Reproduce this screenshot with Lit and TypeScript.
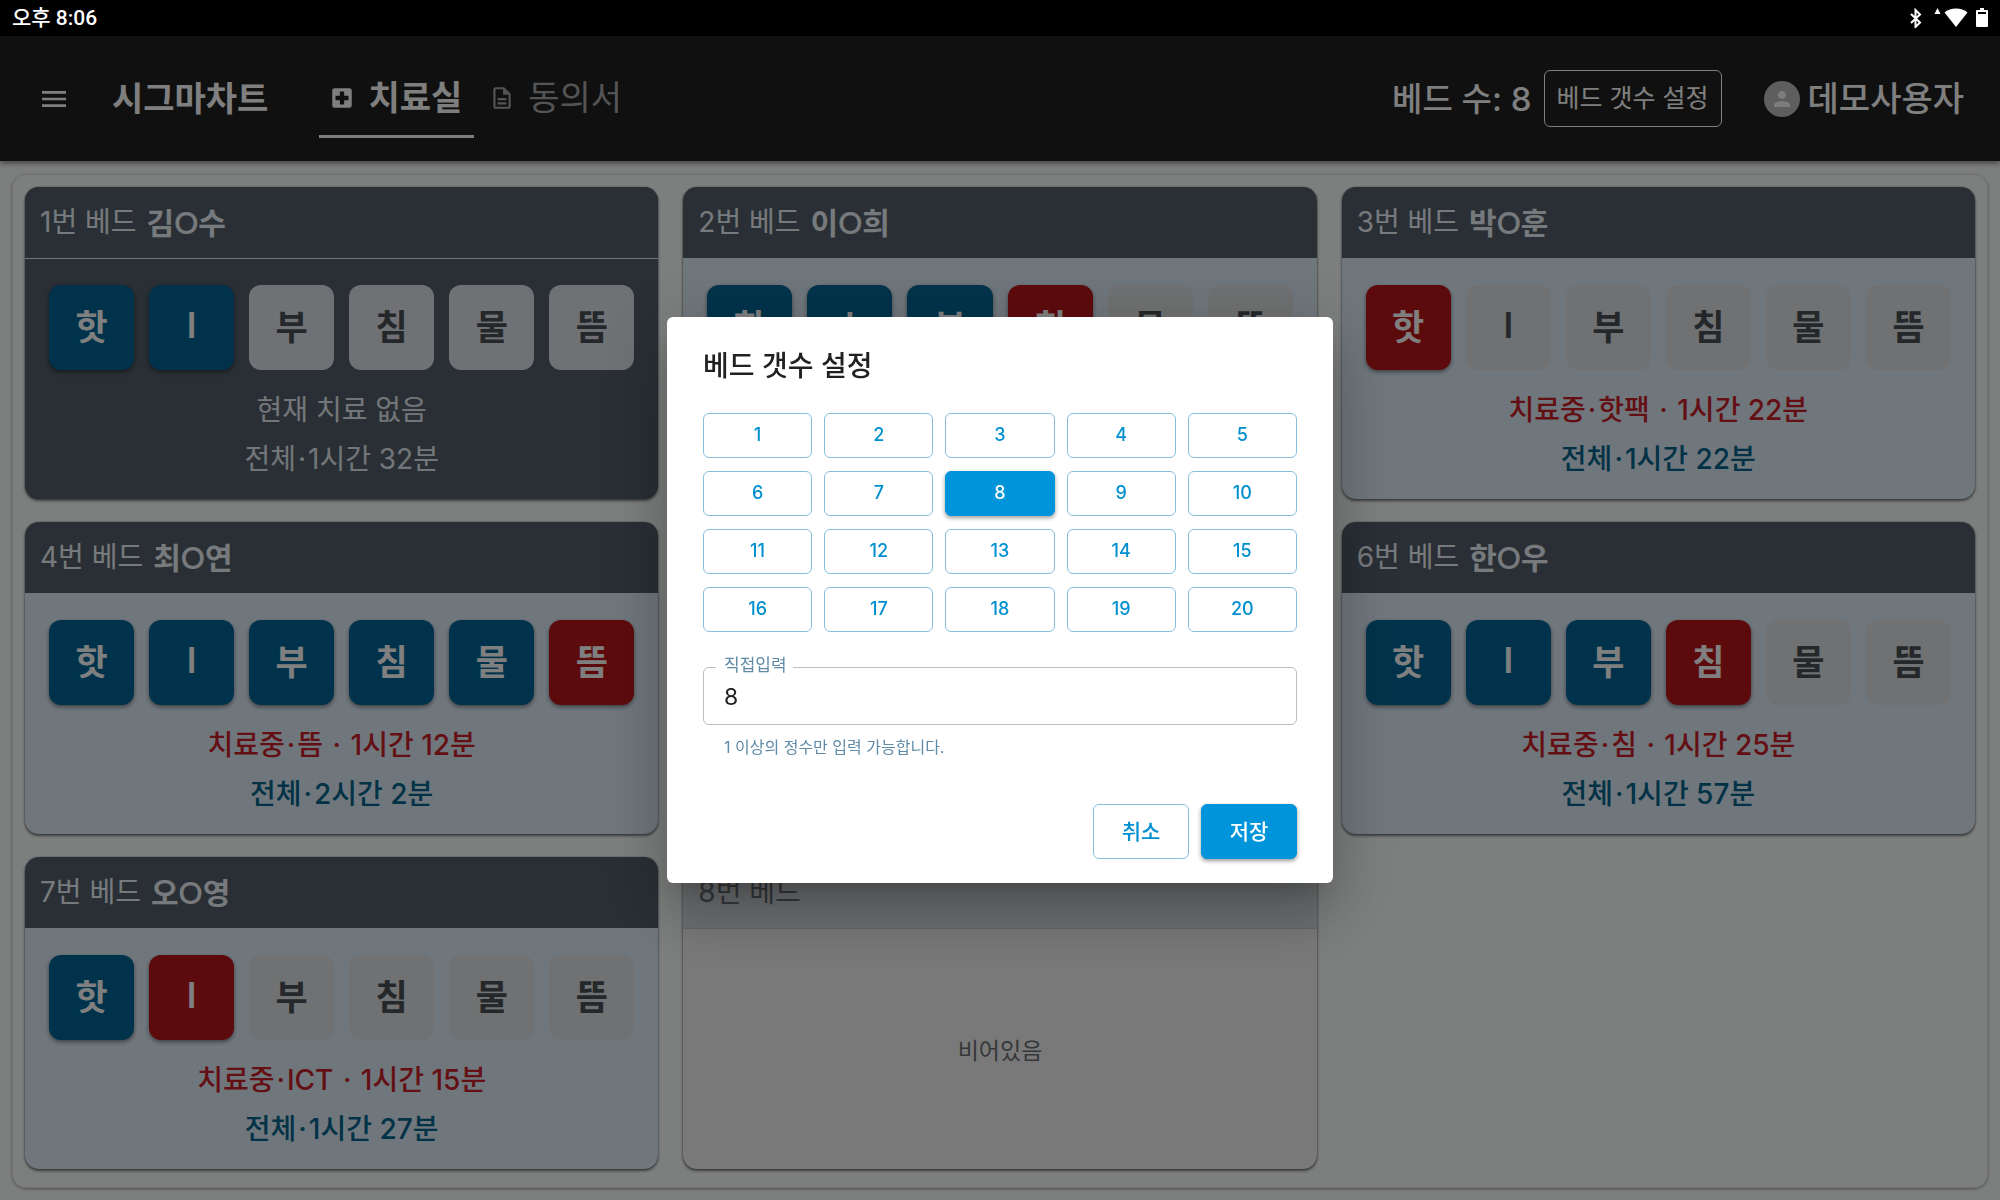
import { LitElement, html, css, svg } from "lit";
import { customElement, state } from "lit/decorators.js";
import { classMap } from "lit/directives/class-map.js";

type Status = "done" | "active" | "none";

interface Bed {
  no: number;
  name?: string;
  idle?: boolean;
  chips?: Status[];
  current?: string;
  total?: string;
}

const LABELS = ["핫", "I", "부", "침", "물", "뜸"];

const row = (done: number, active: boolean): Status[] =>
  LABELS.map((_, i) => (i < done ? "done" : i === done && active ? "active" : "none"));

const BEDS: Bed[] = [
  { no: 1, name: "김O수", idle: true, chips: row(2, false), current: "현재 치료 없음", total: "전체·1시간 32분" },
  { no: 2, name: "이O희", chips: row(3, true) },
  { no: 3, name: "박O훈", chips: row(0, true), current: "치료중·핫팩 · 1시간 22분", total: "전체·1시간 22분" },
  { no: 4, name: "최O연", chips: row(5, true), current: "치료중·뜸 · 1시간 12분", total: "전체·2시간 2분" },
  { no: 5 },
  { no: 6, name: "한O우", chips: row(3, true), current: "치료중·침 · 1시간 25분", total: "전체·1시간 57분" },
  { no: 7, name: "오O영", chips: row(1, true), current: "치료중·ICT · 1시간 15분", total: "전체·1시간 27분" },
  { no: 8 },
];

// Puts each middle dot in its own span so that it gets room on both sides.
const dotted = (text: string) =>
  text.split("·").map((part, i) => (i === 0 ? part : html`<span class="dot">·</span>${part}`));

const icon = (cls: string, body: unknown) =>
  html`<svg class=${cls} viewBox="0 0 24 24" aria-hidden="true">${body}</svg>`;

const menuIcon = svg`<path d="M3 18h18v-2H3v2zm0-5h18v-2H3v2zm0-7v2h18V6H3z"/>`;
const hospitalIcon = svg`<path d="M19 3H5c-1.1 0-1.99.9-1.99 2L3 19c0 1.1.9 2 2 2h14c1.1 0 2-.9 2-2V5c0-1.1-.9-2-2-2zm-1 11h-4v4h-4v-4H6v-4h4V6h4v4h4v4z"/>`;
const documentIcon = svg`<path d="M8 16h8v2H8zm0-4h8v2H8zm6-10H6c-1.1 0-2 .9-2 2v16c0 1.1.89 2 1.99 2H18c1.1 0 2-.9 2-2V8l-6-6zm4 18H6V4h7v5h5v11z"/>`;
const personIcon = svg`<path d="M12 12c2.21 0 4-1.79 4-4s-1.79-4-4-4-4 1.79-4 4 1.79 4 4 4zm0 2c-2.67 0-8 1.34-8 4v2h16v-2c0-2.66-5.33-4-8-4z"/>`;

@customElement("bed-card")
class BedCard extends LitElement {
  static properties = { bed: { attribute: false } };
  declare bed: Bed;

  static styles = css`
    :host { display: block; }
    * { box-sizing: border-box; }
    .card {
      height: 100%;
      display: flex;
      flex-direction: column;
      border-radius: 14px;
      overflow: hidden;
      background: #dfedf9;
      box-shadow: 0 2px 3px rgba(0, 0, 0, 0.5), 0 0 2px rgba(0, 0, 0, 0.4);
    }
    .head {
      display: flex;
      align-items: center;
      gap: 10px;
      height: 72px;
      padding: 0 15px 2px;
      border-bottom: 1px solid #dfedf9;
      background: #525e69;
      color: #eef4fa;
      font-size: 28px;
      line-height: 40px;
      font-weight: 400;
    }
    .name {
      margin: 0;
      font-family: Lato, "Noto Sans CJK KR", sans-serif;
      font-size: 30px;
      font-weight: 600;
    }
    .body { padding: 26px 24px 15px; }
    .chips { display: grid; grid-template-columns: repeat(6, 1fr); gap: 15px; }
    .chip {
      display: flex;
      align-items: center;
      justify-content: center;
      aspect-ratio: 1;
      padding: 0 0 6px;
      border: 0;
      border-radius: 12px;
      background: rgba(224, 224, 224, 0.85);
      color: #4a5157;
      font: inherit;
      font-size: 35px;
      font-weight: 600;
    }
    .chip.done, .chip.active { color: #fff; box-shadow: 0 2px 4px rgba(0, 0, 0, 0.45); }
    .chip.done { background: #006796; }
    .chip.active { background: #bb1518; }
    .line { margin: 0; text-align: center; font-size: 28px; line-height: 49px; font-weight: 500; }
    .dot { margin: 0 2px; }
    .first { margin-top: 16px; color: #c81e28; }
    .total { color: #04648c; }
    .idle { background: #525e69; }
    .idle .line { color: #e6edf3; font-weight: 400; }
    .idle .chip.none { background: #dfe3ea; }
    .empty { background: #f3f3f3; }
    .empty .head { background: #d9dfe4; color: #6b7075; border-bottom-color: #c8cdd2; }
    .vacant {
      flex: 1;
      display: flex;
      align-items: center;
      justify-content: center;
      margin: 0;
      font-size: 23px;
      color: #6b7075;
    }
  `;

  render() {
    const b = this.bed;
    return html`<article class=${classMap({ card: true, idle: !!b.idle, empty: !b.name })}>
      <header class="head">
        <span>${b.no}번 베드</span>
        ${b.name ? html`<h2 class="name">${b.name}</h2>` : ""}
      </header>
      ${b.chips
        ? html`<div class="body">
            <div class="chips">
              ${b.chips.map((s, i) => html`<button type="button" class="chip ${s}">${LABELS[i]}</button>`)}
            </div>
            ${b.current ? html`<p class="line first">${dotted(b.current)}</p>` : ""}
            ${b.total ? html`<p class="line total">${dotted(b.total)}</p>` : ""}
          </div>`
        : html`<p class="vacant">비어있음</p>`}
    </article>`;
  }
}

@customElement("bed-count-dialog")
class BedCountDialog extends LitElement {
  static properties = { value: { type: Number } };
  declare value: number;

  static styles = css`
    :host { display: block; }
    * { box-sizing: border-box; }
    button, input { font: inherit; }
    .dialog {
      width: 666px;
      max-width: 100%;
      padding: 24px 36px;
      border-radius: 6px;
      background: #fff;
      color: #212121;
      box-shadow: 0 16px 22px -10px rgba(0, 0, 0, 0.2), 0 36px 57px 4px rgba(0, 0, 0, 0.14),
        0 13px 69px 12px rgba(0, 0, 0, 0.12);
    }
    .title { margin: 0 0 22px; font-size: 28px; line-height: 50px; font-weight: 500; }
    .numbers { display: grid; grid-template-columns: repeat(5, 1fr); gap: 13px 12px; }
    .btn {
      padding: 0 0 2px;
      border: 1px solid #88c0dc;
      border-radius: 6px;
      background: #fff;
      color: #0090d0;
      font-weight: 500;
    }
    .number { height: 45px; font-size: 18px; }
    .solid {
      border-color: #0095db;
      background: #0095db;
      color: #fff;
      box-shadow: 0 2px 4px rgba(0, 0, 0, 0.4);
    }
    .field {
      height: 71px;
      margin: 22px 0 0;
      padding: 0 8px;
      border: 1px solid #b9c0c6;
      border-radius: 6px;
    }
    .field legend { margin-left: 4px; padding: 0 6px 4px 8px; font-size: 17px; line-height: 22px; color: #5f8ba6; }
    .input {
      display: block;
      width: 100%;
      height: 34px;
      padding: 0 12px;
      border: 0;
      outline: 0;
      background: none;
      color: #212121;
      font-size: 23px;
    }
    .help { margin: 10px 21px 0; font-size: 16px; line-height: 24px; color: #5f8ba6; }
    .actions { display: flex; justify-content: flex-end; gap: 12px; margin-top: 45px; }
    .action { width: 96px; height: 55px; padding-bottom: 4px; font-size: 21px; }
  `;

  render() {
    const nums = Array.from({ length: 20 }, (_, i) => i + 1);
    return html`<section class="dialog" role="dialog" aria-modal="true" aria-labelledby="title">
      <h2 class="title" id="title">베드 갯수 설정</h2>
      <div class="numbers">
        ${nums.map(
          (n) => html`<button
            type="button"
            class=${classMap({ btn: true, number: true, solid: n === this.value })}
            @click=${() => (this.value = n)}
          >${n}</button>`
        )}
      </div>
      <fieldset class="field">
        <legend><label for="count">직접입력</label></legend>
        <input
          class="input"
          id="count"
          type="text"
          inputmode="numeric"
          aria-describedby="help"
          .value=${String(this.value)}
        />
      </fieldset>
      <p class="help" id="help">1 이상의 정수만 입력 가능합니다.</p>
      <div class="actions">
        <button type="button" class="btn action">취소</button>
        <button type="button" class="btn action solid">저장</button>
      </div>
    </section>`;
  }
}

@customElement("app-root")
class AppRoot extends LitElement {
  @state() count = 8;

  static styles = css`
    :host {
      display: block;
      font-family: Inter, "Noto Sans CJK KR", sans-serif;
    }
    * { box-sizing: border-box; }
    svg { display: block; fill: currentColor; flex: none; }
    .screen { min-height: 100vh; display: flex; flex-direction: column; background: #fbfdfd; }
    .status {
      position: relative;
      z-index: 3;
      display: flex;
      align-items: center;
      justify-content: space-between;
      height: 36px;
      padding: 0 12px;
      background: #000;
      color: #fff;
      font-family: Roboto, "Noto Sans CJK KR", sans-serif;
      font-size: 21px;
      line-height: 28px;
      font-weight: 500;
    }
    .tray { display: flex; gap: 8px; }
    .tray svg { height: 20px; }
    .bt { width: 14px; margin-right: 3px; }
    .wifi { width: 34px; }
    .battery { width: 12px; }
    .bar {
      position: relative;
      display: flex;
      align-items: center;
      height: 125px;
      padding: 0 36px 0 38px;
      background: #202020;
      color: #fff;
      box-shadow: 0 2px 6px rgba(0, 0, 0, 0.5);
      font-size: 34px;
      line-height: 48px;
    }
    .menu { padding: 0; border: 0; background: none; color: inherit; }
    .i32 { width: 32px; height: 32px; }
    .i26 { width: 26px; height: 26px; }
    .brand { margin: 0 0 0 42px; font-size: 34px; font-weight: 600; }
    .tabs { display: flex; gap: 5px; margin-left: 51px; }
    .tab {
      display: flex;
      align-items: center;
      gap: 13px;
      height: 78px;
      padding: 2px 12px 0 10px;
      border-bottom: 3px solid transparent;
      color: #a8a8a8;
      text-decoration: none;
    }
    .tab.on { border-bottom-color: #fff; color: #fff; font-weight: 600; }
    .right { display: flex; align-items: center; margin-left: auto; }
    .count { margin-right: 12px; font-size: 33px; font-weight: 500; }
    .setup {
      height: 57px;
      padding: 0 12px 2px;
      border: 1px solid #fff;
      border-radius: 6px;
      background: none;
      color: #fff;
      font: inherit;
      font-size: 25px;
    }
    .avatar {
      display: flex;
      align-items: center;
      justify-content: center;
      width: 36px;
      height: 36px;
      margin: 0 8px 0 42px;
      border-radius: 50%;
      background: #bdbdbd;
      color: #fafafa;
    }
    .avatar svg { width: 24px; height: 24px; }
    .user { font-weight: 500; }
    .main { flex: 1; display: flex; padding: 13px 12px 12px; }
    .board {
      flex: 1;
      display: grid;
      grid-template-columns: repeat(3, minmax(0, 1fr));
      align-content: start;
      gap: 23px 25px;
      padding: 12px;
      border: 1px solid #e4e4e4;
      border-radius: 14px;
      box-shadow: 0 1px 3px rgba(0, 0, 0, 0.4);
    }
    .board bed-card { min-height: 312px; }
    .backdrop {
      position: fixed;
      inset: 0;
      z-index: 2;
      display: flex;
      align-items: center;
      justify-content: center;
      background: rgba(0, 0, 0, 0.5);
    }
  `;

  render() {
    return html`
      <div class="screen">
        <div class="status">
          <span>오후 8:06</span>
          <div class="tray">
            <svg class="bt" viewBox="0 0 14 20" aria-hidden="true">
              <path fill="none" stroke="#fff" stroke-width="2" d="M2 6l9 8.500L6.500 19V2L11 6.500L2 15" />
            </svg>
            <svg class="wifi" viewBox="0 0 34 20" aria-hidden="true">
              <path d="M3.500 0l3 6h-6z" /><path d="M10.500 4.500C16-.8 28-.8 33.500 4.500L22 19z" />
            </svg>
            <svg class="battery" viewBox="0 0 12 20" aria-hidden="true">
              <path d="M4 0h4v2h3a1 1 0 0 1 1 1v15a1 1 0 0 1-1 1H1a1 1 0 0 1-1-1V3a1 1 0 0 1 1-1h3z" />
              <path fill="#000" d="M2 4h8v2H2z" />
            </svg>
          </div>
        </div>
        <header class="bar">
          <button type="button" class="menu" aria-label="메뉴">${icon("i32", menuIcon)}</button>
          <h1 class="brand">시그마차트</h1>
          <nav class="tabs">
            <a class="tab on" href="#room" aria-current="page">${icon("i26", hospitalIcon)}치료실</a>
            <a class="tab" href="#consent">${icon("i26", documentIcon)}동의서</a>
          </nav>
          <div class="right">
            <span class="count">베드 수: ${this.count}</span>
            <button type="button" class="setup">베드 갯수 설정</button>
            <span class="avatar">${icon("", personIcon)}</span>
            <span class="user">데모사용자</span>
          </div>
        </header>
        <main class="main">
          <div class="board">${BEDS.map((b) => html`<bed-card .bed=${b}></bed-card>`)}</div>
        </main>
      </div>
      <div class="backdrop"><bed-count-dialog .value=${this.count}></bed-count-dialog></div>
    `;
  }
}
